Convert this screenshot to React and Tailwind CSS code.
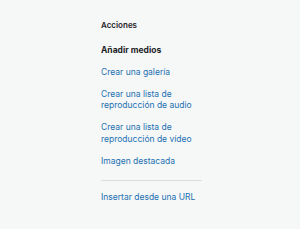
export default function App() {
  const link = "text-[8.5px] leading-[11.5px] text-[#2271b1] py-[5.25px]";
  return (
    <div className="w-[300px] h-[229px] bg-[#f6f7f7] overflow-hidden font-[Inter,'Liberation_Sans',Arial,sans-serif]">
      <div className="pl-[101px] pt-[20.4px] w-[215px]">
        <h2 className="text-[8px] leading-[10px] font-semibold text-[#1d2327]">Acciones</h2>
        <div className="mt-[9.2px] flex flex-col">
          <span className="text-[8.5px] leading-[11.5px] font-bold text-[#1d2327] py-[5.25px]">Añadir medios</span>
          <a className={link}>Crear una galería</a>
          <a className={`${link} w-[101px]`}>Crear una lista de reproducción de audio</a>
          <a className={`${link} w-[101px]`}>Crear una lista de reproducción de vídeo</a>
          <a className={link}>Imagen destacada</a>
          <div className="h-px w-[101px] bg-[#dcdcde] mt-[7.1px] mb-[6.3px]" />
          <a className={link}>Insertar desde una URL</a>
        </div>
      </div>
    </div>
  );
}
